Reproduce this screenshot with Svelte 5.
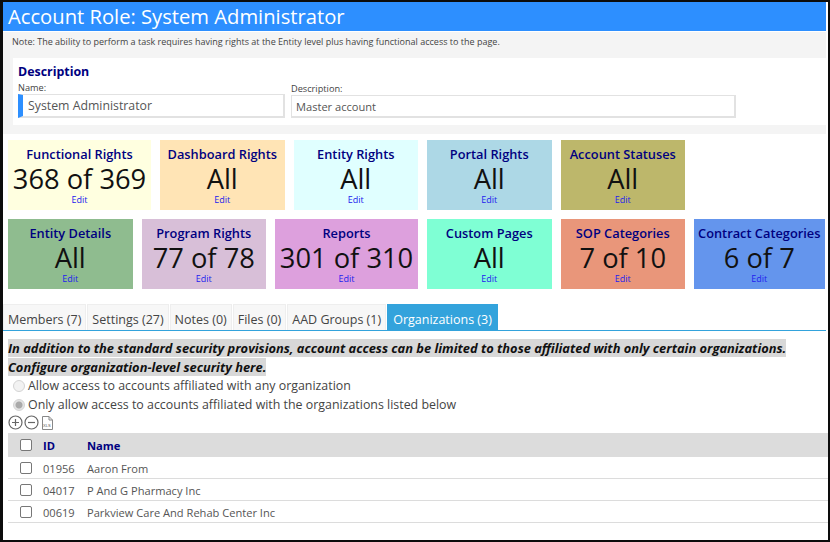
<script>
  const row1 = [
    { t: 'Functional Rights', v: '368 of 369', c: 'lightyellow', w: 'wide' },
    { t: 'Dashboard Rights', v: 'All', c: 'moccasin' },
    { t: 'Entity Rights', v: 'All', c: 'lightcyan' },
    { t: 'Portal Rights', v: 'All', c: 'lightblue' },
    { t: 'Account Statuses', v: 'All', c: 'darkkhaki' }
  ];
  const row2 = [
    { t: 'Entity Details', v: 'All', c: 'darkseagreen' },
    { t: 'Program Rights', v: '77 of 78', c: 'thistle' },
    { t: 'Reports', v: '301 of 310', c: 'plum', w: 'wide' },
    { t: 'Custom Pages', v: 'All', c: 'aquamarine' },
    { t: 'SOP Categories', v: '7 of 10', c: 'darksalmon' },
    { t: 'Contract Categories', v: '6 of 7', c: 'cornflowerblue', w: 'mid' }
  ];
  const tabs = ['Members (7)', 'Settings (27)', 'Notes (0)', 'Files (0)', 'AAD Groups (1)'];
  const orgs = [
    ['01956', 'Aaron From'],
    ['04017', 'P And G Pharmacy Inc'],
    ['00619', 'Parkview Care And Rehab Center Inc']
  ];
</script>

{#snippet card(k)}
  <div class="card {k.w ?? ''}" style:background={k.c}>
    <div class="ct">{k.t}</div>
    <div class="cv">{k.v}</div>
    <a class="ce" href="#e">Edit</a>
  </div>
{/snippet}

<div class="frame">
  <h1>Account Role: System Administrator</h1>
  <div class="note">Note: The ability to perform a task requires having rights at the Entity level plus having functional access to the page.</div>
  <div class="descwrap">
    <section class="desc">
      <h2>Description</h2>
      <div class="fields">
        <label class="f1">
          <span>Name:</span>
          <input class="req" value="System Administrator" />
        </label>
        <label class="f2">
          <span>Description:</span>
          <input value="Master account" />
        </label>
      </div>
    </section>
  </div>
  <div class="band"></div>

  <div class="cards">
    <div class="row">{#each row1 as k}{@render card(k)}{/each}</div>
    <div class="row">{#each row2 as k}{@render card(k)}{/each}</div>
  </div>

  <div class="tabs">
    {#each tabs as t}<div class="tab">{t}</div>{/each}
    <div class="tab on">Organizations (3)</div>
  </div>

  <div class="alert"><span>In addition to the standard security provisions, account access can be limited to those affiliated with only certain organizations. Configure organization-level security here.</span></div>

  <div class="radios">
    <label><input type="radio" name="a" disabled />Allow access to accounts affiliated with any organization</label>
    <label><input type="radio" name="a" disabled checked />Only allow access to accounts affiliated with the organizations listed below</label>
  </div>

  <div class="tools">
    <svg width="15" height="15" viewBox="0 0 15 15"><circle cx="7.5" cy="7.5" r="6.5" /><path d="M4 7.5h7M7.5 4v7" /></svg>
    <svg width="15" height="15" viewBox="0 0 15 15"><circle cx="7.5" cy="7.5" r="6.5" /><path d="M4 7.5h7" /></svg>
    <svg class="xls" width="11" height="14" viewBox="0 0 11 14"><path class="thin" d="M.5.5h6.5l3.5 3.5v9.500h-10zM7 .5v3.500h3.500" /><text x="1" y="10.500">XLS</text></svg>
  </div>

  <table>
    <thead>
      <tr><th class="c0"><input type="checkbox" /></th><th class="c1">ID</th><th>Name</th></tr>
    </thead>
    <tbody>
      {#each orgs as o}
        <tr><td class="c0"><input type="checkbox" /></td><td class="c1">{o[0]}</td><td>{o[1]}</td></tr>
      {/each}
    </tbody>
  </table>
</div>

<style>
  :global(body) { margin: 0; background: #fff; }
  .frame {
    width: 830px; height: 542px; box-sizing: border-box; overflow: hidden;
    border: 2px solid #0c0c0c; border-left-width: 3px; padding-right: 2px;
    background: #fff; color: #444;
    font-family: "Open Sans", "Noto Sans", sans-serif;
  }
  h1 {
    margin: 0; height: 29px; background: #2d8fff; color: #fff;
    font-size: 20.2px; font-weight: 400; line-height: 29px; padding-left: 5px;
  }
  .note {
    margin-top: 1px; height: 26px; box-sizing: border-box; background: #f4f4f4; color: #444;
    font-size: 9.02px; line-height: 19px; padding-left: 9px;
  }
  .descwrap { background: #f4f4f4; padding-left: 10px; }
  .desc { padding: 6px 5px 0; height: 67px; box-sizing: border-box; background: #fff; }
  h2 { margin: 0; color: #000080; font-size: 12.4px; font-weight: 700; line-height: 16px; }
  .fields { display: flex; gap: 6px; margin-top: 2px; }
  .fields label { display: flex; flex-direction: column; }
  .fields span { font-size: 9.2px; line-height: 12px; color: #444; }
  .f1 { width: 267px; }
  .f2 { width: 445px; margin-top: 1px; }
  .fields input {
    box-sizing: border-box; width: 100%; height: 24px; border: 1px solid #e2e2e2; border-bottom-width: 2px; border-right-width: 2px;
    background: #fff; font: inherit; font-size: 11.1px; color: #555; padding: 0 4px; outline: none;
  }
  .f2 input { height: 23px; }
  .fields .req { border-left: 5px solid #2d8fff; padding-left: 5px; font-size: 12.3px; }
  .band { height: 9px; background: #f4f4f4; }

  .cards { padding: 6px 0 0 5px; display: flex; flex-direction: column; gap: 9px; }
  .row { display: flex; gap: 9px; }
  .card {
    width: 124.5px; height: 70px; box-sizing: border-box; text-align: center;
    padding-top: 6px; overflow: hidden; white-space: nowrap;
  }
  .wide { width: 143px; }
  .mid { width: 130.5px; }
  .ct { color: #000080; font-size: 12.8px; font-weight: 600; line-height: 16px; }
  .cv { color: #111; font-size: 27.3px; line-height: 33px; }
  .ce { display: block; color: #2222ee; font-size: 9px; line-height: 10px; text-decoration: none; }

  .tabs { display: flex; gap: 1px; margin-top: 15px; height: 27px; box-sizing: border-box; border-bottom: 1px solid #33a3dc; }
  .tab {
    height: 26px; box-sizing: border-box; padding: 0 4px; background: #f7f7f7; border: 1px solid #eee; border-bottom: 0;
    font-size: 12.5px; line-height: 29px; color: #444;
    white-space: nowrap;
  }
  .tab.on { background: #33a3dc; border-color: #33a3dc; color: #fff; padding: 0 5px; }

  .alert { margin: 8px 0 0 5px; width: 800px; font-size: 12.87px; font-weight: 700; font-style: italic; line-height: 18.7px; color: #111; }
  .alert span { background: #d8d8d8; }

  .radios { margin: 0 0 0 10px; display: flex; flex-direction: column; font-size: 12.4px; line-height: 19px; }
  .radios label { display: flex; align-items: center; gap: 3px; white-space: nowrap; }
  .radios input {
    appearance: none; margin: 0; width: 12px; height: 12px; border-radius: 50%; border: 1px solid #d4d4d4; background: #f2f2f2;
    box-sizing: border-box;
  }
  .radios input:checked { background: radial-gradient(circle, #aaa 0 3px, #e4e4e4 4px); }

  .tools { display: flex; height: 15px; margin: 1px 0 0 5px; gap: 1px; align-items: center; }
  .tools svg { display: block; }
  .tools .xls { margin-left: 2px; }
  .tools circle, .tools path { fill: none; stroke: #666; stroke-width: 1.2; }
  .tools .thin { stroke: #888; stroke-width: 1; }
  .tools text { font-family: "Liberation Sans", sans-serif; font-size: 4px; fill: #555; }

  table { border-collapse: collapse; margin: 3px 0 0 5px; width: 820px; font-size: 11.1px; }
  th { background: #dcdcdc; height: 24px; text-align: left; color: #000080; font-weight: 700; padding: 0; font-size: 11.2px; }
  td { height: 20px; padding: 1px 0 0; border-bottom: 1px solid #dcdcdc; color: #555; }
  .c0 { width: 35px; padding-left: 12px; box-sizing: border-box; }
  .c1 { width: 44px; }
  table input { appearance: none; display: block; margin: 0; width: 12px; height: 12px; border: 1px solid #777; border-radius: 2px; background: #fff; box-sizing: border-box; }
</style>
